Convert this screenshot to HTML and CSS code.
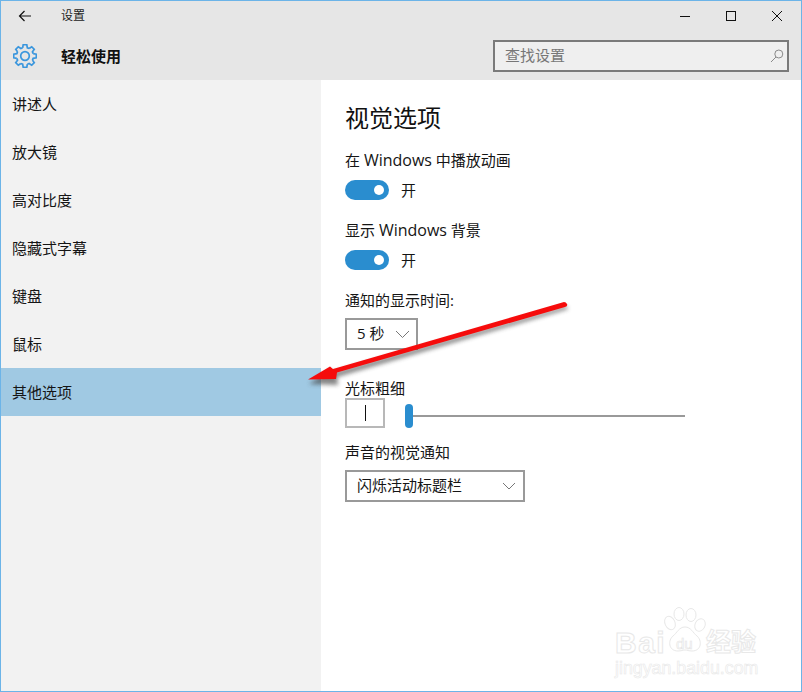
FILE: index.html
```html
<!DOCTYPE html>
<html lang="zh-CN">
<head>
<meta charset="utf-8">
<title>设置</title>
<link rel="stylesheet" href="styles.css">
</head>
<body>
<div class="window">
  <header class="header">
    <div class="titlebar">
      <svg class="back" width="14" height="12" viewBox="0 0 14 12"><path d="M13 6H1.500M6.500 1L1.500 6l5 5" fill="none" stroke="#111" stroke-width="1.200"/></svg>
      <span class="title">设置</span>
      <div class="controls">
        <svg class="ctl" width="46" height="12" viewBox="0 0 46 12"><path d="M18 6.500H28" stroke="#111" stroke-width="1"/></svg>
        <svg class="ctl" width="46" height="12" viewBox="0 0 46 12"><rect x="18.500" y="1.500" width="9" height="9" fill="none" stroke="#111"/></svg>
        <svg class="ctl" width="46" height="12" viewBox="0 0 46 12"><path d="M18 1l10 10M28 1L18 11" stroke="#111" stroke-width="1"/></svg>
      </div>
    </div>
    <div class="approw">
      <svg class="gear" width="24" height="24" viewBox="-12 -12 24 24">
        <defs><path id="tooth" d="M8.170-2.340L11.300-1.800V1.800L8.170 2.340L7.430 4.120" fill="none" stroke="#3a96dd" stroke-width="1.700"/></defs>
        <use href="#tooth"/><use href="#tooth" transform="rotate(45)"/><use href="#tooth" transform="rotate(90)"/><use href="#tooth" transform="rotate(135)"/><use href="#tooth" transform="rotate(180)"/><use href="#tooth" transform="rotate(225)"/><use href="#tooth" transform="rotate(270)"/><use href="#tooth" transform="rotate(315)"/>
        <circle r="4.300" fill="none" stroke="#3a96dd" stroke-width="1.700"/>
      </svg>
      <span class="apptitle">轻松使用</span>
      <div class="search">
        <span class="search-text">查找设置</span>
        <svg width="14" height="14" viewBox="0 0 14 14"><circle cx="8.800" cy="5" r="4" fill="none" stroke="#8a8a8a"/><path d="M6 8L1 13" stroke="#8a8a8a"/></svg>
      </div>
    </div>
  </header>
  <div class="body">
    <nav class="side">
      <div class="item">讲述人</div>
      <div class="item">放大镜</div>
      <div class="item">高对比度</div>
      <div class="item">隐藏式字幕</div>
      <div class="item">键盘</div>
      <div class="item">鼠标</div>
      <div class="item selected">其他选项</div>
    </nav>
    <main class="main">
      <h1 class="heading">视觉选项</h1>
      <div class="label first">在 <span class="latin">Windows</span> 中播放动画</div>
      <div class="toggle-row"><span class="toggle"><span class="knob"></span></span><span>开</span></div>
      <div class="label gap20">显示 <span class="latin">Windows</span> 背景</div>
      <div class="toggle-row"><span class="toggle"><span class="knob"></span></span><span>开</span></div>
      <div class="label gap20">通知的显示时间:</div>
      <div class="select short"><span class="sel-text">5 秒</span><svg width="15" height="8" viewBox="0 0 15 8"><path d="M1 1l6.500 6.500L14 1" fill="none" stroke="#777"/></svg></div>
      <div class="label gap28">光标粗细</div>
      <div class="cursor-row">
        <div class="cursor-box"><span class="caret"></span></div>
        <div class="slider"><span class="thumb"></span><span class="track"></span></div>
      </div>
      <div class="label gap12">声音的视觉通知</div>
      <div class="select long"><span class="sel-text">闪烁活动标题栏</span><svg width="14" height="8" viewBox="0 0 14 8"><path d="M1 1l6 6 6-6" fill="none" stroke="#777"/></svg></div>
    </main>
  </div>

  <svg class="arrow" width="802" height="692" viewBox="0 0 802 692">
    <defs><filter id="sh" x="-10%" y="-30%" width="120%" height="160%"><feGaussianBlur stdDeviation="2"/></filter></defs>
    <path d="M567 305L336 373L337 381L308 380L329 366L333 368L565 302z" fill="#444" opacity=".65" filter="url(#sh)" transform="translate(1 4)"/>
    <path d="M567 304Q568 306 565 307L337 372.500L336 379L308 379.500L330 366.500L333 369L564 302Q566 302 567 304z" fill="#f60c0c"/>
  </svg>

  <div class="mark">
    <span class="mark-bai">Bai</span>
    <svg class="paw" width="44" height="46" viewBox="0 0 44 46" fill="#fff" stroke="#e8e8e8">
      <ellipse cx="7" cy="16" rx="5" ry="7" transform="rotate(-25 7 16)"/>
      <ellipse cx="16" cy="7" rx="5" ry="6.500"/>
      <ellipse cx="28" cy="8" rx="5" ry="6.500"/>
      <ellipse cx="37" cy="18" rx="5" ry="6.500" transform="rotate(25 37 18)"/>
      <path d="M22 20c-6 0-8 6-12 9-5 4-5 15 5 15 3 0 5-1 7-1s4 1 7 1c10 0 10-11 5-15-4-3-6-9-12-9z"/>
    </svg>
    <span class="mark-du">du</span>
    <span class="mark-jy">经验</span>
    <span class="mark-url">jingyan.baidu.com</span>
  </div>
</div>
</body>
</html>
```

FILE: styles.css
```css
* { box-sizing: border-box; }
html, body { margin: 0; padding: 0; background: #fff; }
body {
  font-family: "Open Sans", "Noto Sans CJK SC", sans-serif;
  font-size: 15px;
  color: #151515;
}
.window {
  position: relative;
  width: 802px;
  height: 692px;
  border: 1px solid #6cb4e8;
  display: flex;
  flex-direction: column;
  overflow: hidden;
}
.header { background: #e6e6e6; height: 79px; flex: none; }
.titlebar {
  height: 30px;
  display: flex;
  align-items: center;
}
.back { margin-left: 17px; flex: none; }
.title { margin-left: 29px; font-size: 12px; line-height: 28px; color: #222; }
.controls { margin-left: auto; display: flex; margin-right: 1px; }
.ctl { display: block; }
.approw {
  height: 49px;
  display: flex;
  align-items: center;
  padding: 0 12px;
}
.gear { flex: none; }
.apptitle { margin-left: 24px; font-weight: 700; font-size: 15px; color: #111; }
.search {
  margin-left: auto;
  width: 296px;
  height: 32px;
  border: 2px solid #7a7a7a;
  background: #efefef;
  display: flex;
  align-items: center;
  justify-content: space-between;
  padding: 0 3px 0 10px;
  color: #777;
}
.search-text { line-height: 20px; margin-bottom: 2px; }
.body { flex: 1; display: flex; min-height: 0; }
.side { width: 320px; background: #f2f2f2; flex: none; }
.item { height: 48px; line-height: 48px; padding-left: 11px; font-size: 15px; }
.item.selected { background: #a0c9e3; }
.main { flex: 1; padding: 20px 0 0 24px; }
.heading { margin: 0; font-size: 24px; line-height: 36px; font-weight: 400; color: #111; }
.label { line-height: 20px; height: 20px; font-size: 15px; white-space: nowrap; }
.latin { font-size: 16px; }
.label.first { margin-top: 14px; }
.gap20 { margin-top: 20px; }
.gap28 { margin-top: 28px; }
.gap12 { margin-top: 12px; }
.toggle-row { display: flex; align-items: center; gap: 12px; height: 20px; margin-top: 10px; line-height: 20px; }
.toggle {
  width: 44px;
  height: 20px;
  border-radius: 10px;
  background: #2a8dcf;
  display: flex;
  align-items: center;
  justify-content: flex-end;
  padding-right: 5px;
}
.knob { width: 10px; height: 10px; border-radius: 50%; background: #fff; }
.select {
  margin-top: 8px;
  height: 32px;
  border: 2px solid #999;
  display: flex;
  align-items: center;
  justify-content: space-between;
  padding: 0 6px 0 10px;
}
.sel-text { margin-bottom: 3px; line-height: 20px; }
.select.short { width: 73px; }
.select.long { width: 180px; padding-right: 7px; }
.cursor-row { display: flex; height: 32px; }
.cursor-box {
  width: 40px;
  height: 30px;
  border: 2px solid #b8b8b8;
  display: flex;
  align-items: center;
  justify-content: center;
}
.caret { width: 1px; height: 16px; background: #111; }
.slider { margin-left: 20px; width: 280px; display: flex; align-items: center; height: 38px; margin-top: -1px; }
.thumb { width: 8px; height: 24px; border-radius: 4px; background: #2a8dcf; flex: none; }
.track { height: 2px; background: #999; flex: 1; }
.arrow { position: absolute; left: -1px; top: -1px; pointer-events: none; }
.mark { position: absolute; left: 0; top: 0; width: 800px; height: 690px; pointer-events: none; font-family: "Liberation Sans", "Noto Sans CJK SC", sans-serif; color: #fff; -webkit-text-stroke: 1px #e8e8e8; }
.mark-bai { position: absolute; left: 614px; top: 630px; font-size: 30px; letter-spacing: 1.500px; line-height: 24px; font-weight: 700; }
.paw { position: absolute; left: 662px; top: 606px; }
.mark-du { position: absolute; left: 675px; top: 634px; font-size: 15px; line-height: 18px; -webkit-text-stroke: .6px #e4e4e4; }
.mark-jy { position: absolute; left: 705px; top: 626px; font-size: 25px; line-height: 30px; font-weight: 700; }
.mark-url { position: absolute; left: 614px; top: 659px; font-size: 17.800px; line-height: 16px; -webkit-text-stroke: .6px #e8e8e8; }
```
